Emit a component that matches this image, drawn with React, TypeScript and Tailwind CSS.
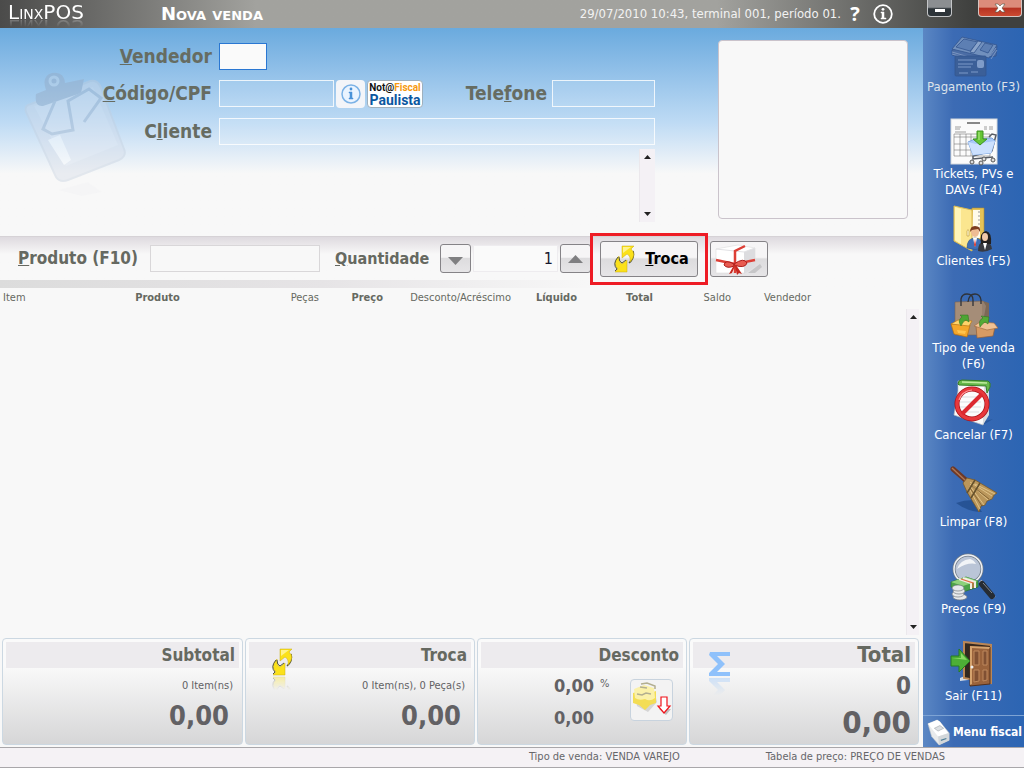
import { useState } from "react";
import type { ReactNode } from "react";

interface MenuItem {
  label: string;
  icon: ReactNode;
  disabled?: boolean;
}

interface Column {
  label: string;
  width: string;
  align: string;
}

function SwapIcon({ className }: { className?: string }) {
  return (
    <svg viewBox="0 0 24 28" className={className} aria-hidden="true">
      <path d="M16 18q6-5 4-12" fill="none" stroke="#55573c" strokeWidth="1.500" />
      <path d="M9 1h12l-3 3q6 5-1 13 1-6-3-8l-5 4z" fill="#fbe11a" stroke="#c9ad12" strokeWidth="0.5" />
      <path d="M14 27H2l3-3q-6-5 1-13-1 6 3 8l5-4z" fill="#fbe11a" stroke="#c9ad12" strokeWidth="0.5" />
      <path d="M2 26l2-2q-5-5 1-12M6 12q0 5 3 6l4-3" fill="none" stroke="#55573c" strokeWidth="1" />
      <path d="M10 2h8l-8 6z" fill="#fff38b" />
    </svg>
  );
}

function MoneyIcon() {
  return (
    <svg viewBox="0 0 48 48" className="size-12" aria-hidden="true">
      <g stroke="#34568f" strokeWidth="0.8">
        <path d="M2 19v5l16 5 28-4 1-10-4-1z" fill="#4b6da5" />
        <path d="M2 18L12 6l35 8-8 13z" fill="#7190bd" />
        <path d="M6 16l8-8 14 3-8 9z" fill="#5d7fb3" />
        <path d="M30 19l5-7 8 2-5 8z" fill="#5d7fb3" />
        <path d="M20 21l8-11 4 1-8 11z" fill="#8aa4ca" />
        <path d="M2 21l17 5 3 0M2 23l17 5M40 25l6-8M41 28l6-9" fill="none" stroke="#88a0c8" />
        <rect x="5" y="25" width="31" height="20" rx="1" fill="#3b5f98" />
      </g>
      <path d="M8 29h18M8 33h15M8 36h13M9 42h9M21 41h7" stroke="#7d9ac8" strokeWidth="1.2" />
      <rect x="27" y="29" width="7" height="8" rx="2" fill="#7f9cc9" />
    </svg>
  );
}

function TicketIcon() {
  return (
    <svg viewBox="0 0 48 48" className="size-12" aria-hidden="true">
      <rect x="1" y="1" width="46" height="45" fill="#fbfbfb" stroke="#d5d9de" />
      <path d="M17 5h13" stroke="#888" strokeWidth="2" />
      <path d="M5 9h6M5 11h5M5 14h11M34 9h3M39 9h4M34 11h3M39 11h4" stroke="#888" strokeWidth="0.8" />
      <path d="M4 16h36v22H4zM4 19h36M4 26h22M4 32h22M10 16v22M16 16v22M21 16v22" fill="none" stroke="#777" strokeWidth="0.6" />
      <path d="M39 19l3-3 4 1-4 16-19 5v3l20-2" fill="none" stroke="#565b64" strokeWidth="1.5" />
      <path d="M18 24l7-3 17-1 3 3-4 12-18 2z" fill="#a9c9f7" stroke="#7da5df" />
      <path d="M18 24l8 2 19-3-4 12-18 2z" fill="#cce0fd" />
      <g fill="#ddd" stroke="#555">
        <circle cx="22" cy="44" r="2" /><circle cx="31" cy="45" r="2" />
        <circle cx="34" cy="41" r="2" /><circle cx="43" cy="42" r="2" />
      </g>
      <path d="M27 13h6v8h4l-7 6-7-6h4z" fill="#65c534" stroke="#3c9320" />
      <path d="M29 14v8" stroke="#b5ec89" />
    </svg>
  );
}

function ClientsIcon() {
  return (
    <svg viewBox="0 0 48 48" className="size-12" aria-hidden="true">
      <path d="M22 3h12v30l-16 9z" fill="#e4c257" stroke="#ae8b2e" strokeWidth="0.6" />
      <path d="M23 5h7v28h-8z" fill="#fffbea" />
      <path d="M29 6v20" stroke="#999" strokeDasharray="2 2" />
      <path d="M4 1l18 4v41L4 36z" fill="#fbe68f" stroke="#dab951" />
      <path d="M5 2l6 2v35l-6-4z" fill="#fff5b8" />
      <path d="M17 26q1-3 2 0v5h-2z" fill="#fff8d0" stroke="#b89337" strokeWidth="0.6" />
      <path d="M17 43q0-10 8-10t8 10q-8 3-16 0z" fill="#3e6fb6" stroke="#244a83" strokeWidth="0.5" />
      <path d="M23 33h4l-2 9z" fill="#fff" />
      <path d="M25 34l1 6-1 2-1-2z" fill="#d7352f" />
      <ellipse cx="25" cy="27" rx="4" ry="5" fill="#eebc94" />
      <path d="M20 27q0-6 5-6 6 0 5 6l-2-3-6 1z" fill="#7c3d20" />
      <path d="M28 46q0-10 7-9 6-1 7 7-7 4-14 2z" fill="#373940" />
      <path d="M31 39q-2-12 5-13 6 1 5 13z" fill="#23201f" />
      <ellipse cx="35" cy="32" rx="3" ry="4" fill="#f1c8a9" />
      <path d="M33 38h4l-2 7z" fill="#fff" />
    </svg>
  );
}

function BagIcon() {
  return (
    <svg viewBox="0 0 48 48" className="size-12" aria-hidden="true">
      <path d="M5 10l28-1v34H5z" fill="#a58d78" stroke="#786250" strokeWidth="0.6" />
      <path d="M33 9l6 2v31l-6 2z" fill="#7c6857" />
      <path d="M33 9l3 5-3 16z" fill="#948070" />
      <path d="M11 14V7q1-5 6-5 6 0 6 6v6M18 10q1-8 7-8 5 0 6 6v4" fill="none" stroke="#2f3238" strokeWidth="1.3" />
      <path d="M1 32l19 1-3 12-13-3z" fill="#f4a72b" stroke="#b96f0d" strokeWidth="0.7" />
      <path d="M1 32l7-4 14 1-3 5z" fill="#ffd36a" stroke="#bd7918" strokeWidth="0.7" />
      <path d="M7 38l9 1-1 3-7-1z" fill="#ffc34d" />
      <path d="M11 34q-4-6 1-9l-2-2 8 0 1 7-3-2q-3 1-5 6z" fill="#4ea534" stroke="#2c711d" strokeWidth="0.5" />
      <path d="M26 34l19 1-2 9-16 2z" fill="#d89b63" stroke="#94603a" strokeWidth="0.7" />
      <path d="M24 34l6-4 14 1 4 5-11 2z" fill="#f0c193" stroke="#a36d44" strokeWidth="0.7" />
      <path d="M30 35q-2-7 3-9l-2-2 8 1-1 7-3-2q-3 2-5 5z" fill="#55aa36" stroke="#2c711d" strokeWidth="0.5" />
    </svg>
  );
}

function CancelIcon() {
  return (
    <svg viewBox="0 0 48 48" className="size-12" aria-hidden="true">
      <path d="M31 43l12-3-10 6z" fill="#1c4685" opacity="0.5" />
      <path d="M8 2l30 2 1 4-6 38-29-10 4-24z" fill="#fafafa" stroke="#b6bbc0" strokeWidth="0.7" />
      <path d="M39 5v31l-6 10 1-38z" fill="#d8dce0" />
      <path d="M8 5q0-4 4-4l26 1q3 1 2 6l-3 6-1-7-27-1z" fill="#67b84a" stroke="#377c29" />
      <path d="M12 3l25 1" stroke="#c0eb9f" strokeWidth="1.5" />
      <path d="M11 18h20M10 23h21M9 28h22M8 33h21" stroke="#bcc1c7" />
      <circle cx="22" cy="25" r="15" fill="#fff" fillOpacity="0.45" stroke="#a91119" strokeWidth="5" />
      <circle cx="22" cy="25" r="15" fill="none" stroke="#e7383c" strokeWidth="3.500" />
      <path d="M12 35l20-20" stroke="#dc2930" strokeWidth="4" />
      <path d="M9 21q3-9 13-10" fill="none" stroke="#ff9a9a" strokeWidth="1.2" />
    </svg>
  );
}

function BroomIcon() {
  return (
    <svg viewBox="0 0 48 48" className="size-12" aria-hidden="true">
      <path d="M6 37q8-3 17-3l9 12q-14 0-26-9z" fill="#173f7c" opacity="0.55" />
      <path d="M3 3l16 14" stroke="#6d3927" strokeWidth="5" strokeLinecap="round" />
      <path d="M2 2l14 13" stroke="#ae7653" strokeWidth="1.5" />
      <path d="M17 12l8 2 22 13-3 2-2 4-5 2-2 4-4 1-2 6-12-20-4-9z" fill="#ba965b" stroke="#7b5927" strokeWidth="0.8" />
      <path d="M20 16l22 14M20 18l18 16M20 20l14 19M19 22l11 21M25 18l20 10" stroke="#e8cd92" strokeWidth="0.8" />
      <path d="M22 20l17 13M20 22l12 18" stroke="#6f5024" strokeWidth="0.7" />
      <path d="M25 14l-8 13M30 17l-9 15" stroke="#64502c" strokeWidth="1.5" />
    </svg>
  );
}

function PricesIcon() {
  return (
    <svg viewBox="0 0 48 48" className="size-12" aria-hidden="true">
      <path d="M30 28l14 17" stroke="#b5bbc2" strokeWidth="4" />
      <path d="M32 31l10 12" stroke="#262c33" strokeWidth="6" strokeLinecap="round" />
      <path d="M33 30l9 10" stroke="#828a93" strokeWidth="1" />
      <circle cx="18" cy="16" r="14" fill="#c9cfda" fillOpacity="0.9" stroke="#707b87" strokeWidth="3" />
      <circle cx="18" cy="16" r="14" fill="none" stroke="#eef1f5" strokeWidth="1.5" />
      <path d="M7 16q3-9 13-10 4 1 6 5-8-2-19 5z" fill="#fff" opacity="0.8" />
      <path d="M1 29l15-5 12 4v6l-15 5-12-5z" fill="#4ca347" stroke="#26722e" strokeWidth="0.7" />
      <path d="M1 29l15-5 12 4-15 5z" fill="#8ed27b" />
      <path d="M9 26l12 4v6M13 25l12 4v6" fill="none" stroke="#f2eee4" strokeWidth="2" />
      <path d="M11 26l12 4v5" fill="none" stroke="#e36a41" strokeWidth="1.2" />
      <g fill="#e6e9eb" stroke="#747a80" strokeWidth="0.7">
        <ellipse cx="10" cy="44" rx="7" ry="3" />
        <ellipse cx="8" cy="41" rx="6" ry="3" />
        <ellipse cx="9" cy="38" rx="6" ry="3" />
        <ellipse cx="8" cy="35" rx="6" ry="3" />
      </g>
    </svg>
  );
}

function ExitIcon() {
  return (
    <svg viewBox="0 0 48 48" className="size-12" aria-hidden="true">
      <path d="M10 38l7-3 1 5-8 1z" fill="#d4dce7" />
      <path d="M14 2l27 3v38l-27-5z" fill="#312820" stroke="#bb8655" strokeWidth="2" />
      <path d="M20 6l20 1v37l-20 2z" fill="#9a633c" stroke="#55301b" />
      <path d="M20 6l20 1-1 2-17-1v36l-2 1z" fill="#d5a36e" />
      <g fill="#805033" stroke="#be885c" strokeWidth="1">
        <path d="M24 11h5v14h-5zM33 11h4v14h-4zM24 30h5v11l-5 1zM33 30h4v10l-4 1z" />
      </g>
      <circle cx="22" cy="27" r="1.5" fill="#eee" />
      <path d="M1 16h8v-7l11 12L9 32v-6H1z" fill="#4daf36" stroke="#277b23" />
      <path d="M2 18h9v-5l6 7z" fill="#8bd864" />
    </svg>
  );
}

function PrinterIcon() {
  return (
    <svg viewBox="0 0 26 28" className="h-7 w-6 shrink-0" aria-hidden="true">
      <path d="M1 5l10-4 3 2 10 12v8L13 28 5 19z" fill="#e9ebec" stroke="#bfc4c8" strokeWidth="0.6" />
      <path d="M1 5l10-4 3 2 9 12-11 4z" fill="#fff" />
      <path d="M12 19l12-4v8l-11 5z" fill="#d3d7da" />
      <path d="M8 10l6-3 4 3-6 3z" fill="#dde0e3" stroke="#989ea4" strokeWidth="0.6" />
      <path d="M15 23l6-2" stroke="#4f7f98" strokeWidth="1.3" />
    </svg>
  );
}

function GiftIcon() {
  return (
    <svg viewBox="0 0 50 32" className="h-8 w-[50px]" aria-hidden="true">
      <path d="M34 30l12-9 2 3-7 6z" fill="#c6c6c8" />
      <path d="M2 6l22-4 17 3v19l-11 6H2z" fill="#fff" stroke="#ddd" strokeWidth="0.6" />
      <path d="M30 9l11-4v19l-11 7z" fill="#dcdcdf" />
      <path d="M2 6l28 3 11-4" fill="none" stroke="#e2e2e5" />
      <path d="M21 30V8l10-5M2 17l19 4 20-4" fill="none" stroke="#dd3f36" strokeWidth="2.500" />
      <path d="M20 21q-9-5-10 1 3 4 10 1zM20 21q10-7 13-1-2 6-13 2z" fill="#e85b50" stroke="#ac1e1b" />
      <path d="M20 22l-5 9 3-1 3-7 2 9 2-2 3 1-6-9z" fill="#c6281f" />
    </svg>
  );
}

function DiscountIcon() {
  return (
    <svg viewBox="0 0 40 38" className="h-[38px] w-10" aria-hidden="true">
      <path d="M4 18l19-5 2 8-9 10-11-6z" fill="#b7b7b7" opacity="0.5" />
      <path d="M1 12l7-2 8 3 8-3v12l-6 2-5 5-6-5-6-2z" fill="#f3dd55" />
      <path d="M2 8l10-4 10 3 1 10q-5 4-10 1-6 2-10-1z" fill="#fbf1a9" />
      <path d="M9 3l6-1 8 3v3M8 6l7 1M5 13l5 1 4-2 5 1" fill="none" stroke="#b3af90" strokeWidth="1.5" />
      <path d="M31 20h4v8h4l-5 6-7-6h4z" fill="#999" opacity="0.6" />
      <path d="M29 16h6v9h3l-6 7-6-7h3z" fill="#fff" stroke="#f0131a" strokeWidth="1.2" />
    </svg>
  );
}

function ClipboardArt() {
  return (
    <svg viewBox="0 0 104 136" className="absolute top-10 left-6 h-[136px] w-[104px] opacity-40" aria-hidden="true">
      <g transform="translate(0 2)">
        <path d="M7 34q-7 1-5 8l30 65q4 6 12 3l51-20q8-4 5-11L77 18q-4-10-13-6z" fill="#d4dbe8" stroke="#c3cedd" strokeWidth="2" />
        <path d="M10 36l59-19 25 58-52 21z" fill="#e7edf5" opacity="0.5" />
        <path d="M12 24l10-4q-5-14 6-17 12-2 13 10l19-4-3 14-38 13q-9 1-7-12z" fill="#93a7c1" />
        <circle cx="30" cy="11" r="4" fill="none" stroke="#c4d5e7" strokeWidth="3" />
        <path d="M31 31L19 59l9 5 21-4-5-29 21-12 12 9-17 24" fill="none" stroke="#9eb0c8" strokeWidth="3" />
        <path d="M24 70l12-5 11 25-7 5z" fill="#fff" />
      </g>
      <path d="M34 122l30-8 14 10-20 4z" fill="#e4e5ea" opacity="0.3" />
    </svg>
  );
}

const menuItems: MenuItem[] = [
  { label: "Pagamento (F3)", icon: <MoneyIcon />, disabled: true },
  { label: "Tickets, PVs e DAVs (F4)", icon: <TicketIcon /> },
  { label: "Clientes (F5)", icon: <ClientsIcon /> },
  { label: "Tipo de venda (F6)", icon: <BagIcon /> },
  { label: "Cancelar (F7)", icon: <CancelIcon /> },
  { label: "Limpar (F8)", icon: <BroomIcon /> },
  { label: "Preços (F9)", icon: <PricesIcon /> },
  { label: "Sair (F11)", icon: <ExitIcon /> },
];

const columns: Column[] = [
  { label: "Item", width: "w-9", align: "text-left font-normal" },
  { label: "Produto", width: "w-[243px]", align: "text-center font-bold" },
  { label: "Peças", width: "w-10", align: "text-right font-normal" },
  { label: "Preço", width: "w-16", align: "text-right font-bold" },
  { label: "Desconto/Acréscimo", width: "w-32", align: "text-right font-normal" },
  { label: "Líquido", width: "w-[66px]", align: "text-right font-bold" },
  { label: "Total", width: "w-[76px]", align: "text-right font-bold" },
  { label: "Saldo", width: "w-[78px]", align: "text-right font-normal" },
  { label: "Vendedor", width: "w-20", align: "text-right font-normal" },
];

function ScrollTrack({ className }: { className: string }) {
  return (
    <div className={`flex flex-col justify-between border-l border-[#ebe8ec] bg-[#f4f1f5] ${className}`}>
      <button type="button" aria-label="Rolar para cima" className="flex h-4 items-center justify-center">
        <svg viewBox="0 0 7 4" className="h-1 w-[7px]"><path d="M0 4L3.500 0 7 4z" fill="#222" /></svg>
      </button>
      <button type="button" aria-label="Rolar para baixo" className="flex h-4 items-center justify-center">
        <svg viewBox="0 0 7 4" className="h-1 w-[7px]"><path d="M0 0h7L3.500 4z" fill="#222" /></svg>
      </button>
    </div>
  );
}

function TotalCard({ title, big, children }: { title: string; big?: boolean; children: ReactNode }) {
  return (
    <section className="relative h-[107px] rounded border border-[#ccd8e2] bg-linear-to-b from-[#fafafa] from-25% to-[#d6d6d7] p-[3px]">
      <h2
        className={
          big
            ? "h-[26px] bg-[#edebee] pr-1 text-right text-[22px] leading-[26px] font-bold text-[#666961]"
            : "h-[26px] bg-[#edebee] pr-1 text-right text-[17px] leading-[26px] font-bold text-[#666961]"
        }
      >
        {title}
      </h2>
      {children}
    </section>
  );
}

const fieldClass = "h-[27px] min-w-0 border px-1 outline-none";
const formLabel = "text-right text-[19px] leading-[27px] font-bold text-[#666c62]";
const barButton =
  "flex items-center justify-center rounded-[3px] border border-[#858387] bg-linear-to-b from-[#f6f5f6] from-45% via-[#dddcde] via-50% to-[#e6e5e7]";

export default function App() {
  const [quantity, setQuantity] = useState(1);

  return (
    <div className="flex min-h-screen flex-col bg-[#f8f8f8] font-['DejaVu_Sans_Condensed','Noto_Sans',sans-serif] text-[#666961]">
      <header className="bg-linear-to-r from-[#4b4b4a] to-[#a2a29e] to-25% text-white">
        <div className="flex h-7 items-center bg-linear-to-r from-transparent from-70% to-[#3f403e] to-95%">
          <div className="h-7 w-[161px] shrink-0 overflow-hidden pl-2 font-['DejaVu_Sans',sans-serif] text-xl leading-6 [font-variant-caps:small-caps]">
            <span className="block [-webkit-box-reflect:below_-9px_linear-gradient(transparent_50%,rgba(255,255,255,0.4))]">LinxPOS</span>
          </div>
          <h1 className="flex-1 font-['DejaVu_Sans',sans-serif] text-lg font-bold [font-variant-caps:small-caps]">Nova venda</h1>
          <p className="text-[13px] text-[#f2f2f2]">29/07/2010 10:43, terminal 001, período 01.</p>
          <button type="button" aria-label="Ajuda" className="ml-1 w-5 text-center font-['Open_Sans',sans-serif] text-xl leading-7 font-bold">
            ?
          </button>
          <button type="button" aria-label="Informações" className="ml-2">
            <svg viewBox="0 0 20 20" className="size-5">
              <circle cx="10" cy="10" r="8.800" fill="none" stroke="#fff" strokeWidth="1.800" />
              <path d="M8 8h3v6h2v1H8v-1h1V9H8z" fill="#fff" stroke="#fff" strokeWidth="0.500" />
              <circle cx="10" cy="5.300" r="1.400" fill="#fff" />
            </svg>
          </button>
          <button type="button" aria-label="Minimizar" className="ml-[34px] flex h-[17px] w-[25px] items-center justify-center self-start rounded-b border border-t-0 border-[#c4c6c8] bg-linear-to-b from-[#8b8e91] from-45% to-[#2d3439] to-55%">
            <span className="mt-1 h-[3px] w-[10px] bg-white" />
          </button>
          <button type="button" aria-label="Fechar" className="mr-[2px] ml-[26px] flex h-[17px] w-11 items-center justify-center self-start rounded-b border border-t-0 border-[#d6c5c2] bg-linear-to-b from-[#dc8c7b] from-45% via-[#b53222] via-50% to-[#cc4a31]">
            <svg viewBox="0 0 12 10" className="h-[10px] w-3">
              <path d="M1 1h3l2 2 2-2h3L8 5l3 4H8L6 7 4 9H1l3-4z" fill="#fff" stroke="#554" strokeWidth="0.600" />
            </svg>
          </button>
        </div>
      </header>

      <div className="flex flex-1">
        <main className="flex min-w-0 flex-1 flex-col">
          <section className="relative flex justify-between bg-linear-to-b from-[#6aaade] via-[#bddaf4] via-45% to-[#f8f8f8] to-70% pr-[15px] pb-[14px]">
            <ClipboardArt />
            <form className="relative flex w-[655px] flex-col pt-[15px]">
              <div className="flex gap-[7px]">
                <label htmlFor="vendedor" className={`w-[212px] ${formLabel}`}>
                  <u>V</u>endedor
                </label>
                <input id="vendedor" className={`w-12 border-[#2a77d2] bg-[#fafafa] ${fieldClass}`} />
              </div>
              <div className="mt-[10px] flex">
                <label htmlFor="codigo" className={`mr-[7px] w-[212px] ${formLabel}`}>
                  <u>C</u>ódigo/CPF
                </label>
                <input id="codigo" className={`w-[115px] border-white/80 bg-white/10 ${fieldClass}`} />
                <button type="button" aria-label="Informações do cliente" className="ml-[2px] flex h-7 w-[29px] items-center justify-center rounded-sm bg-[#f3f5f9]">
                  <svg viewBox="0 0 20 20" className="size-5">
                    <circle cx="10" cy="10" r="9" fill="#eaf4ff" stroke="#7bb2e6" strokeWidth="1.500" />
                    <path d="M8 8h3v6h1v1H8v-1h1V9H8z" fill="#4a92d8" stroke="#4a92d8" strokeWidth="0.500" />
                    <circle cx="10" cy="5" r="1.400" fill="#4a92d8" />
                  </svg>
                </button>
                <button type="button" className="ml-[2px] h-7 w-14 rounded border border-[#9fb0bd] bg-white text-center font-['Roboto',sans-serif] font-bold">
                  <span className="block text-[10px] leading-3 text-[#111]">
                    Not@<span className="text-[#f79a10]">Fiscal</span>
                  </span>
                  <span className="block text-sm leading-[13px] text-[#0b57a0]">Paulista</span>
                </button>
                <label htmlFor="telefone" className={`mr-[5px] ml-auto ${formLabel}`}>
                  Tele<u>f</u>one
                </label>
                <input id="telefone" type="tel" className={`w-[103px] border-white/80 bg-white/10 ${fieldClass}`} />
              </div>
              <div className="mt-[10px] flex gap-[7px]">
                <label htmlFor="cliente" className={`w-[212px] ${formLabel}`}>
                  C<u>l</u>iente
                </label>
                <input id="cliente" className={`flex-1 border-white/80 bg-white/10 ${fieldClass}`} />
              </div>
              <div className="mt-1 flex h-[73px] justify-end">
                <ScrollTrack className="w-4" />
              </div>
            </form>
            <div className="mt-3 h-[179px] w-[190px] rounded border border-[#cac3cb] bg-[#f8f8f8]" />
          </section>

          <section className="flex h-11 items-center border-t border-[#d6d2d6] bg-linear-to-b from-[#dedadf] to-[#f8f8f8] to-40% pl-[18px]">
            <label htmlFor="produto" className="w-[132px] text-[17px] font-bold whitespace-nowrap">
              <u>P</u>roduto (F10)
            </label>
            <input id="produto" className={`w-[170px] border-[#d9d7d9] bg-[#f8f8f8] ${fieldClass}`} />
            <label htmlFor="quantidade" className="ml-[15px] w-[105px] text-base font-bold">
              <u>Q</u>uantidade
            </label>
            <button type="button" aria-label="Diminuir" onClick={() => setQuantity(Math.max(1, quantity - 1))} className={`h-[29px] w-[31px] ${barButton}`}>
              <svg viewBox="0 0 15 8" className="mt-1 h-2 w-[15px]"><path d="M0 0h15L7.500 8z" fill="#7f7f81" /></svg>
            </button>
            <input
              id="quantidade"
              value={quantity}
              onChange={(e) => setQuantity(Number(e.target.value) || 1)}
              className={`mx-[2px] w-[85px] border-[#eeecef] bg-[#fafafa] text-right text-base text-[#181830] ${fieldClass}`}
            />
            <button type="button" aria-label="Aumentar" onClick={() => setQuantity(quantity + 1)} className={`h-[29px] w-[31px] ${barButton}`}>
              <svg viewBox="0 0 15 8" className="h-2 w-[15px]"><path d="M0 8h15L7.500 0z" fill="#7f7f81" /></svg>
            </button>
            <div className="relative ml-[9px]">
              <button type="button" className={`h-9 w-[98px] gap-2 pl-1 text-base font-bold text-black ${barButton}`}>
                <SwapIcon className="h-7 w-6" />
                <span><u>T</u>roca</span>
              </button>
              <div className="pointer-events-none absolute -inset-x-[10px] -inset-y-2 border-3 border-[#ee1c25]" />
            </div>
            <button type="button" aria-label="Presente" className={`ml-3 h-9 w-[58px] ${barButton}`}>
              <GiftIcon />
            </button>
          </section>
          <div className="h-2 bg-linear-to-r from-[#dcdcdc] via-[#e6e4e6] via-35% to-[#f8f8f8] to-65%" />

          <section className="flex min-h-[340px] flex-1 pr-1">
            <div className="min-w-0 flex-1">
              <table className="w-full table-fixed text-[11px] leading-5">
                <thead>
                  <tr>
                    {columns.map((column) => (
                      <th key={column.label} scope="col" className={`p-0 whitespace-nowrap first:pl-[3px] ${column.width} ${column.align}`}>
                        {column.label}
                      </th>
                    ))}
                    <td />
                  </tr>
                </thead>
                <tbody />
              </table>
            </div>
            <ScrollTrack className="mt-[21px] w-[13px]" />
          </section>

          <section className="grid grid-cols-[241fr_230fr_210fr_230fr] gap-[2px] pt-[3px] pr-1 pb-[2px] pl-[2px] text-right text-[#626164]">
            <TotalCard title="Subtotal">
              <p className="mt-2 pr-[6px] text-[11px] leading-5">0 Item(ns)</p>
              <p className="mt-1 pr-[10px] text-[27px] leading-8 font-bold">0,00</p>
            </TotalCard>
            <TotalCard title="Troca">
              <SwapIcon className="absolute top-[9px] left-[25px] h-7 w-6 [-webkit-box-reflect:below_0_linear-gradient(transparent_50%,rgba(255,255,255,0.4))]" />
              <p className="mt-2 pr-[6px] text-[11px] leading-5">0 Item(ns), 0 Peça(s)</p>
              <p className="mt-1 pr-[10px] text-[27px] leading-8 font-bold">0,00</p>
            </TotalCard>
            <TotalCard title="Desconto">
              <div className="mt-[2px] flex justify-end pr-[10px]">
                <div className="text-lg leading-8 font-bold">
                  <p>0,00</p>
                  <p>0,00</p>
                </div>
                <span className="w-9 pl-[6px] text-left text-[11px] leading-7">%</span>
                <button type="button" aria-label="Aplicar desconto" className="mt-[9px] flex h-[42px] w-[43px] items-center justify-center rounded-sm border border-[#c8d3de] bg-[#f3f3f3]">
                  <DiscountIcon />
                </button>
              </div>
            </TotalCard>
            <TotalCard title="Total" big>
              <svg viewBox="0 0 24 26" className="absolute top-3 left-[18px] h-[26px] w-6 [-webkit-box-reflect:below_0_linear-gradient(transparent_30%,rgba(255,255,255,0.4))]" aria-hidden="true">
                <path d="M2 1h20v4H9l8 8-8 8h13v4H1v-3l9-9-9-9z" fill="#8fc1fb" />
              </svg>
              <p className="mt-[2px] pr-1 text-2xl leading-8 font-bold">0</p>
              <p className="mt-[2px] pr-1 text-[31px] leading-9 font-bold">0,00</p>
            </TotalCard>
          </section>
        </main>

        <aside className="flex w-[101px] shrink-0 flex-col bg-linear-to-r from-[#5b87c4] via-[#3c6bb4] via-30% to-[#2c65b3] text-white">
          <nav className="flex flex-col pt-[3px]">
            {menuItems.map((item) => (
              <button
                key={item.label}
                type="button"
                disabled={item.disabled}
                className="flex h-[87px] flex-col items-center text-[13px] leading-4 last:h-auto disabled:text-[#dce2ea]"
              >
                {item.icon}
                <span className="max-w-[98px]">{item.label}</span>
              </button>
            ))}
          </nav>
          <button type="button" className="mt-auto flex h-8 items-center gap-[2px] border-t border-[#7da3d4] pl-1 text-xs font-bold whitespace-nowrap">
            <PrinterIcon />
            Menu fiscal
          </button>
        </aside>
      </div>

      <footer className="flex h-[21px] items-center justify-end border-y border-[#a9a7aa] bg-[#f5f2f5] pr-[79px] text-[11px] text-[#66666a]">
        <span className="mr-[86px]">Tipo de venda: VENDA VAREJO</span>
        <span>Tabela de preço: PREÇO DE VENDAS</span>
      </footer>
    </div>
  );
}
